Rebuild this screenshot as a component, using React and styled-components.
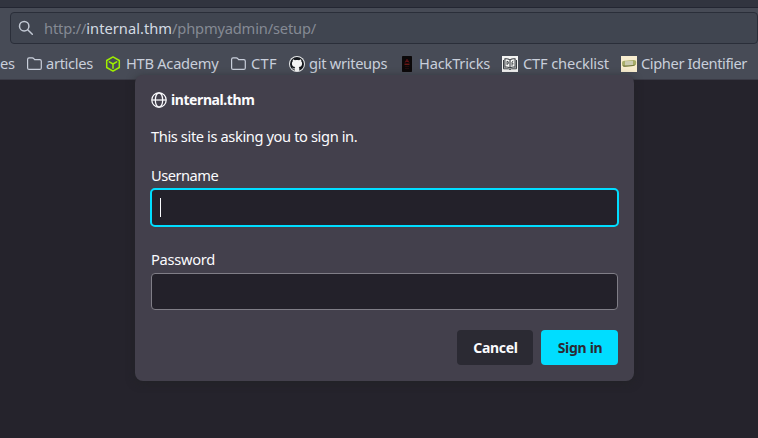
import React from "react";
import styled, { createGlobalStyle } from "styled-components";

const GlobalStyle = createGlobalStyle`
  * { box-sizing: border-box; }
  body {
    margin: 0;
    overflow: hidden;
    background: #25232c;
    font-family: "Noto Sans", sans-serif;
    font-size: 14.67px;
  }
`;

const Browser = styled.div`
  position: relative;
  display: flex;
  flex-direction: column;
  width: 758px;
  height: 438px;
  overflow: hidden;
`;

const TabStrip = styled.div`
  height: 8px;
  flex: none;
  background: #31343f;
  border-bottom: 1px solid #232632;
`;

const Toolbar = styled.header`
  display: flex;
  flex-direction: column;
  height: 72px;
  flex: none;
  padding: 4px 0 0 10px;
  background: #474b56;
  border-bottom: 1px solid #3b3b46;
`;

const AddressBar = styled.div`
  display: flex;
  align-items: center;
  gap: 10px;
  width: 748px;
  height: 32px;
  padding: 0 7px;
  background: #404550;
  border: 1px solid #2a2e39;
  border-radius: 4px;
`;

const Address = styled.span`
  color: #858a94;
  line-height: 20px;
  white-space: nowrap;
  letter-spacing: -0.17px;
`;

const Host = styled.span`
  color: #d3dae3;
  letter-spacing: 0.02px;
`;

const Bookmarks = styled.nav`
  display: flex;
  height: 16px;
  margin: 12px 0 0 -10px;
`;

const Bookmark = styled.div`
  display: flex;
  align-items: center;
  flex: none;
  gap: ${(p) => p.$gap || 4}px;
  width: ${(p) => p.$width}px;
  color: #c9cfdb;
  white-space: nowrap;

  svg { flex: none; }
`;

const BookmarkLabel = styled.span`
  height: 22px;
  line-height: 20px;
  letter-spacing: ${(p) => p.$spacing || 0}px;
`;

const Dialog = styled.form`
  position: absolute;
  left: 135px;
  top: 75px;
  display: flex;
  flex-direction: column;
  width: 499px;
  height: 306px;
  padding: 16px;
  background: #43404c;
  border-radius: 8px;
  box-shadow: 0 2px 8px rgba(32, 34, 35, 0.65);
  color: #fbfbfe;
`;

const Site = styled.div`
  display: flex;
  align-items: center;
  gap: 4px;
  height: 17px;
  font-weight: 700;
  font-size: 14px;
  letter-spacing: -0.42px;
`;

const Message = styled.p`
  margin: 18px 0 0;
  line-height: 20px;
  letter-spacing: -0.39px;
`;

const Label = styled.label`
  height: 20px;
  margin-top: ${(p) => p.$top}px;
  line-height: 20px;
  letter-spacing: ${(p) => p.$spacing}px;
`;

const Field = styled.input`
  width: 467px;
  height: 37px;
  margin-top: ${(p) => p.$top}px;
  padding: 0 8px;
  background: #23212a;
  border: 1px solid #807e87;
  border-radius: 4px;
  outline: none;
`;

const FocusedField = styled.div`
  display: flex;
  align-items: center;
  width: 469px;
  height: 39px;
  margin: 3px 0 0 -1px;
  padding-left: 8px;
  background: #23212a;
  border: 2px solid #00ddff;
  border-radius: 5px;
`;

const Caret = styled.span`
  width: 1px;
  height: 19px;
  background: #fbfbfe;
`;

const Actions = styled.div`
  display: flex;
  justify-content: flex-end;
  gap: 8px;
  margin-top: 20px;
`;

const Button = styled.button`
  width: ${(p) => (p.$primary ? 77 : 76)}px;
  height: 35px;
  padding: 0 0 0 1px;
  border: 0;
  border-radius: 4px;
  background: ${(p) => (p.$primary ? "#00ddff" : "#2b2a33")};
  color: ${(p) => (p.$primary ? "#2b2a33" : "#fbfbfe")};
  font: 700 14px "Noto Sans", sans-serif;
  letter-spacing: -0.3px;
`;

const Folder = () => (
  <svg width="16" height="16" viewBox="-0.6 0 16 16" fill="none" stroke="#c9cfdb" strokeWidth="1.2">
    <path d="M2.500 1.900h3.200c.7 0 1.100.3 1.500.8l.8 1h5.200c.9 0 1.500.6 1.500 1.500v6.700c0 .9-.6 1.500-1.500 1.500H2.500c-.9 0-1.500-.6-1.500-1.500V3.400c0-.9.6-1.500 1.500-1.500z" />
  </svg>
);

const Cube = () => (
  <svg width="16" height="16" viewBox="0 0 16 16" fill="none" stroke="#9fef00" strokeWidth="1.5" strokeLinejoin="round" strokeLinecap="round">
    <path d="M8 .9l6.300 3.600v7L8 15.100l-6.300-3.600v-7zM4.300 5.900L8 8l3.700-2.100M8 8v4.200" />
  </svg>
);

const Octocat = () => (
  <svg width="16" height="16" viewBox="0 0 16 16">
    <circle cx="8" cy="8" r="8" fill="#e8eaeb" />
    <circle cx="8" cy="8" r="7" fill="#15181d" />
    <path fill="#f5f5f5" d="M4 3.200l2 1c1.300-.3 2.700-.3 4 0l2-1c.4.8.4 1.500.2 2.100.6.6.9 1.300.9 2.100 0 2.500-1.500 3.400-3.400 3.600.5.4.6 1 .6 1.800v2.100c-1.500.5-3.100.5-4.600 0v-1.600c-1.800.3-2-.8-2.700-1.500 1.200 0 1.200 1 2.700.7 0-.7.2-1.200.6-1.500-1.900-.2-3.400-1.100-3.400-3.600 0-.8.3-1.500.9-2.100-.2-.6-.2-1.300.2-2.100z" />
  </svg>
);

const Card = () => (
  <svg width="16" height="16" viewBox="0 0 16 16">
    <rect x="3" width="10" height="16" rx=".7" fill="#0b0809" />
    <path d="M6.200 6.500L8 3.300l2 3.200M7.200 5.500h1.800" fill="none" stroke="#78151b" strokeWidth=".8" />
    <path d="M5.500 8.200h5" stroke="#a3221c" strokeWidth=".9" />
    <path d="M6 10.500h4M6 12.500h4" stroke="#2e1013" strokeWidth=".7" />
  </svg>
);

const Book = () => (
  <svg width="16" height="16" viewBox="0 0 16 16">
    <rect width="16" height="16" fill="#f4f4f3" />
    <g fill="none" stroke="#3b3f44">
      <path strokeWidth="1.100" d="M8 4C6.500 2.900 4.800 2.600 2.900 2.900v8.200c2-.2 3.800 0 5.100 1 1.300-1 3.100-1.200 5.100-1V2.900C11.200 2.600 9.500 2.900 8 4zM8 4v8" />
      <path strokeWidth="1" d="M1.500 4v8.800h5l1.500.8 1.500-.8h5V4" />
      <path strokeWidth=".9" d="M5 5.200v3.600M5 5.300l1.300.5v1.800L5 8.200M11.300 5.200L10 6v3.700M10 7.800h1.500" />
    </g>
  </svg>
);

const Cryptex = () => (
  <svg width="16" height="16" viewBox="0 0 16 16">
    <rect width="16" height="16" fill="#f8edcf" />
    <path d="M1 7.500C1 5 2 4.500 4 4.700l8-.7c2-.2 3.200.3 3.200 2.500 0 2.300-1 3.200-3 3.400l-8 .8C2 10.900 1 9.800 1 7.500z" fill="#a8ad68" />
    <path d="M4 5.200l8-.5v4.200l-8 .9z" fill="#cbcbb1" />
    <path d="M1.500 9.200c3 1 9-.1 13-.8-.5.9-1.200 1.300-2.500 1.500l-8 .9c-1.200.1-2-.4-2.500-1.600z" fill="#62672f" opacity=".8" />
  </svg>
);

const Globe = () => (
  <svg width="16" height="16" viewBox="0 0 16 16" fill="none" stroke="#fbfbfe" strokeWidth="1.250">
    <circle cx="8" cy="8" r="7.200" />
    <ellipse cx="8" cy="8" rx="3.700" ry="7.200" />
    <path d="M1 8h14" />
  </svg>
);

const Search = () => (
  <svg width="16" height="16" viewBox="0 0 16 16" fill="none" stroke="#c2c9d4" strokeWidth="1.500" strokeLinecap="round">
    <circle cx="6.200" cy="6.200" r="4.700" />
    <path d="M9.700 9.700l4.600 4.500" />
  </svg>
);

const bookmarks = [
  { label: "articles", Icon: Folder, width: 79, spacing: -0.32 },
  { label: "HTB Academy", Icon: Cube, width: 125, gap: 5, spacing: -0.27 },
  { label: "CTF", Icon: Folder, width: 59, gap: 5, spacing: 0.3 },
  { label: "git writeups", Icon: Octocat, width: 110, spacing: -0.3 },
  { label: "HackTricks", Icon: Card, width: 103, spacing: -0.2 },
  { label: "CTF checklist", Icon: Book, width: 119, gap: 5, spacing: -0.15 },
  { label: "Cipher Identifier", Icon: Cryptex, width: 130, spacing: -0.4 },
];

export default function App() {
  return (
    <>
      <GlobalStyle />
      <Browser>
        <TabStrip />
        <Toolbar>
          <AddressBar>
            <Search />
            <Address>http://<Host>internal.thm</Host>/phpmyadmin/setup/</Address>
          </AddressBar>
          <Bookmarks>
            <Bookmark $width={26}><BookmarkLabel $spacing={-0.3}>es</BookmarkLabel></Bookmark>
            {bookmarks.map(({ label, Icon, width, gap, spacing }) => (
              <Bookmark key={label} $width={width} $gap={gap}>
                <Icon />
                <BookmarkLabel $spacing={spacing}>{label}</BookmarkLabel>
              </Bookmark>
            ))}
          </Bookmarks>
        </Toolbar>
        <Dialog>
          <Site><Globe />internal.thm</Site>
          <Message>This site is asking you to sign in.</Message>
          <Label $top={19} $spacing={-0.52}>Username</Label>
          <FocusedField><Caret /></FocusedField>
          <Label $top={22} $spacing={-0.28}>Password</Label>
          <Field type="password" aria-label="Password" $top={4} />
          <Actions>
            <Button type="button">Cancel</Button>
            <Button type="button" $primary>Sign in</Button>
          </Actions>
        </Dialog>
      </Browser>
    </>
  );
}
